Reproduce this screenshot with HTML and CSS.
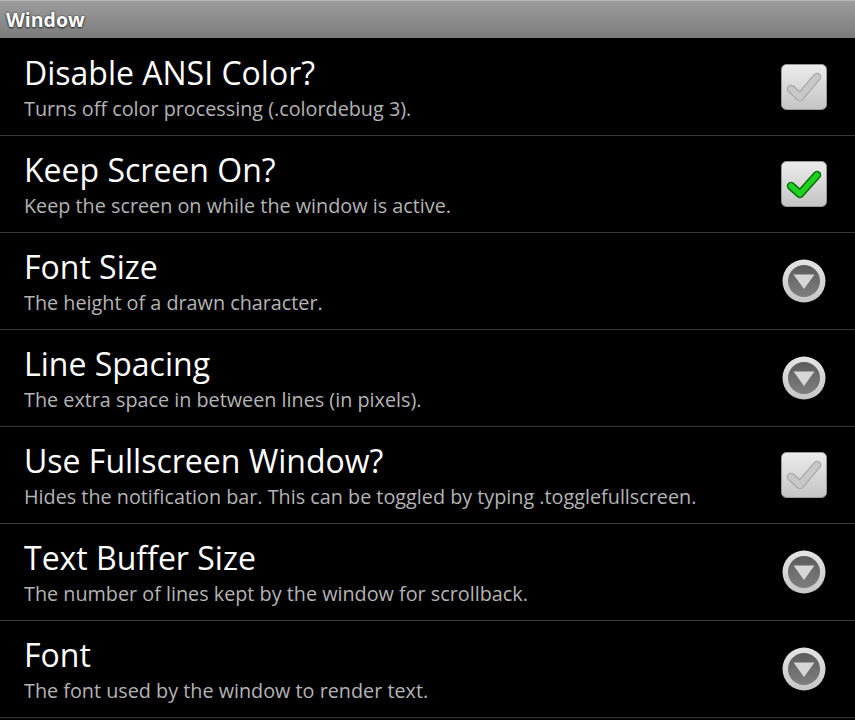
FILE: index.html
```html
<!DOCTYPE html>
<html>
<head>
<meta charset="utf-8">
<link rel="stylesheet" href="styles.css">
</head>
<body>
<div class="titlebar"><span class="title">Window</span></div>
<div class="list">
  <div class="row">
    <div class="text"><div class="t">Disable ANSI Color?</div><div class="s">Turns off color processing (.colordebug 3).</div></div>
    <svg class="cb" viewBox="0 0 46 46"><use href="#box"/><use href="#checkoff"/></svg>
  </div>
  <div class="row">
    <div class="text"><div class="t">Keep Screen On?</div><div class="s">Keep the screen on while the window is active.</div></div>
    <svg class="cb" viewBox="0 0 46 46"><use href="#box"/><use href="#checkon"/></svg>
  </div>
  <div class="row">
    <div class="text"><div class="t">Font Size</div><div class="s">The height of a drawn character.</div></div>
    <svg class="dd" viewBox="0 0 46 46"><use href="#drop"/></svg>
  </div>
  <div class="row">
    <div class="text"><div class="t">Line Spacing</div><div class="s">The extra space in between lines (in pixels).</div></div>
    <svg class="dd" viewBox="0 0 46 46"><use href="#drop"/></svg>
  </div>
  <div class="row">
    <div class="text"><div class="t">Use Fullscreen Window?</div><div class="s">Hides the notification bar. This can be toggled by typing .togglefullscreen.</div></div>
    <svg class="cb" viewBox="0 0 46 46"><use href="#box"/><use href="#checkoff"/></svg>
  </div>
  <div class="row">
    <div class="text"><div class="t">Text Buffer Size</div><div class="s">The number of lines kept by the window for scrollback.</div></div>
    <svg class="dd" viewBox="0 0 46 46"><use href="#drop"/></svg>
  </div>
  <div class="row last">
    <div class="text"><div class="t">Font</div><div class="s">The font used by the window to render text.</div></div>
    <svg class="dd" viewBox="0 0 46 46"><use href="#drop"/></svg>
  </div>
</div>
<svg class="defs" width="0" height="0">
  <defs>
    <linearGradient id="boxg" x1="0" y1="0" x2="0" y2="1">
      <stop offset="0" stop-color="#ececec"/>
      <stop offset="1" stop-color="#c4c4c4"/>
    </linearGradient>
    <linearGradient id="ring" x1="0" y1="0" x2="0" y2="1">
      <stop offset="0" stop-color="#e4e4e4"/>
      <stop offset="1" stop-color="#c6c6c6"/>
    </linearGradient>
    <linearGradient id="core" x1="0" y1="0" x2="0" y2="1">
      <stop offset="0" stop-color="#5a5a5a"/>
      <stop offset="0.5" stop-color="#6e6e6e"/>
      <stop offset="1" stop-color="#7e7e7e"/>
    </linearGradient>
    <g id="box">
      <rect x="0.5" y="0.5" width="45" height="45" rx="5" fill="url(#boxg)" stroke="#9a9a9a"/>
    </g>
    <g id="checkoff">
      <polyline points="10,25 19,33 36,13" fill="none" stroke="#a8a8a8" stroke-width="8.5" stroke-linecap="round" stroke-linejoin="round"/>
      <polyline points="10,25 19,33 36,13" fill="none" stroke="#c8c8c8" stroke-width="6" stroke-linecap="round" stroke-linejoin="round"/>
    </g>
    <g id="checkon">
      <polyline points="10,25 19,33 36,14" fill="none" stroke="#0d6b0d" stroke-width="8.5" stroke-linecap="round" stroke-linejoin="round"/>
      <polyline points="10,25 19,33 36,14" fill="none" stroke="#1ed21e" stroke-width="5.5" stroke-linecap="round" stroke-linejoin="round"/>
    </g>
    <g id="drop">
      <circle cx="23" cy="23" r="21.5" fill="url(#ring)"/>
      <circle cx="23" cy="23" r="16" fill="url(#core)"/>
      <polygon points="12.5,16.5 33.5,16.5 23,31" fill="#d6d6d6"/>
    </g>
  </defs>
</svg>
</body>
</html>
```
FILE: styles.css
```css
html, body {
  margin: 0;
  padding: 0;
  background: #000;
}
body {
  width: 855px;
  height: 720px;
  overflow: hidden;
  font-family: "Open Sans", "DejaVu Sans", sans-serif;
}
.titlebar {
  height: 38px;
  box-sizing: border-box;
  border-top: 1px solid #b8b8b8;
  background: linear-gradient(#9c9c9c, #7c7c7c);
  display: flex;
  align-items: center;
  padding-left: 6px;
}
.title {
  color: #fff;
  font-weight: bold;
  font-size: 19.5px;
  text-shadow: 0 0 2px #333, 0 1px 2px #222;
  line-height: 1;
}
.list {
  display: flex;
  flex-direction: column;
}
.row {
  height: 96px;
  border-bottom: 1px solid #3a3a3a;
  display: flex;
  align-items: center;
  padding: 0 28px 0 24px;
  box-sizing: content-box;
}
.row:first-child {
  margin-top: 1px;
}
.text {
  flex: 1;
  align-self: flex-start;
  padding-top: 16px;
  display: flex;
  flex-direction: column;
}
.t {
  color: #fff;
  font-size: 32px;
  line-height: 36px;
  white-space: nowrap;
}
.s {
  color: #b4b4b4;
  font-size: 19.8px;
  line-height: 26px;
  margin-top: 5px;
  white-space: nowrap;
}
.cb, .dd {
  width: 46px;
  height: 46px;
  flex: none;
}
.defs {
  position: absolute;
}
```
